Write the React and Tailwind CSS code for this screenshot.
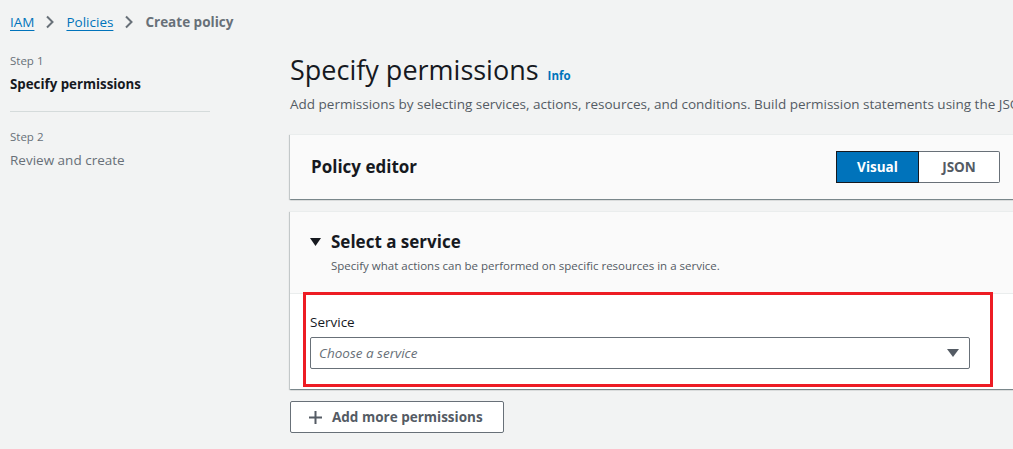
import React from 'react';

const font = { fontFamily: '"Open Sans", "Noto Sans", sans-serif' };

const Chevron = () => (
  <svg width="10" height="14" viewBox="0 0 10 14" className="mx-[11px] shrink-0">
    <path d="M2 1.5 7.5 7 2 12.5" fill="none" stroke="#687078" strokeWidth="2" />
  </svg>
);

const Breadcrumbs = () => (
  <div className="flex items-center h-[44px] pl-[10px] text-[13.5px]">
    <a className="text-[#0073bb] underline underline-offset-[3px]">IAM</a>
    <Chevron />
    <a className="text-[#0073bb] underline underline-offset-[3px]">Policies</a>
    <Chevron />
    <span className="text-[#687078] font-bold">Create policy</span>
  </div>
);

const Steps = () => (
  <div className="w-[200px] ml-[10px] shrink-0 pt-[8px]">
    <div className="text-[11.5px] text-[#687078] leading-[18px]">Step 1</div>
    <div className="text-[13.3px] font-bold text-[#16191f] leading-[20px] mt-[4px]">Specify permissions</div>
    <div className="border-t border-[#d5dbdb] mt-[17px] mb-[16px]" />
    <div className="text-[11.5px] text-[#687078] leading-[18px]">Step 2</div>
    <div className="text-[13.5px] text-[#687078] leading-[20px] mt-[4px]">Review and create</div>
  </div>
);

const cardShadow =
  'shadow-[0_1px_1px_0_rgba(0,28,36,0.3),1px_1px_1px_0_rgba(0,28,36,0.15),-1px_1px_1px_0_rgba(0,28,36,0.15)]';

export default function App() {
  return (
    <div style={font} className="w-[1013px] h-[449px] overflow-hidden bg-[#f2f3f3] text-[#16191f]">
      <Breadcrumbs />
      <div className="flex">
        <Steps />
        <div className="ml-[80px] w-[731px] shrink-0">
          <div className="flex items-baseline mt-[6px]">
            <h1 className="text-[27px] leading-[40px] text-[#16191f]">Specify permissions</h1>
            <a className="ml-[9px] text-[11.5px] font-bold text-[#0073bb]">Info</a>
          </div>
          <p className="text-[13.5px] text-[#545b64] whitespace-nowrap leading-[20px] mt-[4px]">
            Add permissions by selecting services, actions, resources, and conditions. Build permission statements using the JSON editor.
          </p>

          <div className={`mt-[20px] h-[65px] bg-[#fafafa] border-t border-[#eaeded] ${cardShadow} flex items-center pl-[21px] pr-[21px]`}>
            <h2 className="text-[17px] font-bold leading-[22px] flex-1">Policy editor</h2>
            <div className="flex h-[32px] text-[13.5px] font-bold">
              <button className="w-[83px] bg-[#0073bb] text-white border border-[#16191f]">Visual</button>
              <button className="w-[81px] bg-white text-[#545b64] border border-[#687078] border-l-0 rounded-r-[2px]">JSON</button>
            </div>
          </div>

          <div className={`relative mt-[12px] bg-white border-t border-[#eaeded] ${cardShadow}`}>
            <div className="bg-[#fafafa] border-b border-[#eaeded] h-[82px] pl-[20px] pt-[17px]">
              <div className="flex items-center">
                <svg width="11" height="10" viewBox="0 0 11 10" className="mr-[10px]">
                  <path d="M0 1h11L5.5 9z" fill="#16191f" />
                </svg>
                <h2 className="text-[17px] font-bold leading-[26px]">Select a service</h2>
              </div>
              <p className="text-[11.5px] text-[#545b64] leading-[18px] ml-[21px] mt-[2px]">
                Specify what actions can be performed on specific resources in a service.
              </p>
            </div>
            <div className="px-[20px] pt-[18px] pb-[20px]">
              <label className="block text-[13.5px] leading-[20px] text-[#16191f]">Service</label>
              <div className="mt-[5px] w-[660px] h-[32px] border border-[#687078] rounded-[2px] bg-white flex items-center pl-[8px] pr-[10px]">
                <span className="flex-1 text-[13.5px] italic text-[#687078]">Choose a service</span>
                <svg width="12" height="10" viewBox="0 0 12 10">
                  <path d="M0 1h12L6 9z" fill="#545b64" />
                </svg>
              </div>
            </div>
            <div className="absolute left-[13px] top-[80px] w-[690px] h-[95px] border-[3px] border-[#ed1c24] pointer-events-none" />
          </div>

          <button className="mt-[12px] h-[32px] w-[214px] border border-[#687078] rounded-[2px] bg-white flex items-center pl-[17px] text-[13.5px] font-bold text-[#545b64]">
            <svg width="15" height="15" viewBox="0 0 15 15" className="mr-[9px]">
              <path d="M7.5 1v13M1 7.5h13" stroke="#545b64" strokeWidth="2" fill="none" />
            </svg>
            Add more permissions
          </button>
        </div>
      </div>
    </div>
  );
}
